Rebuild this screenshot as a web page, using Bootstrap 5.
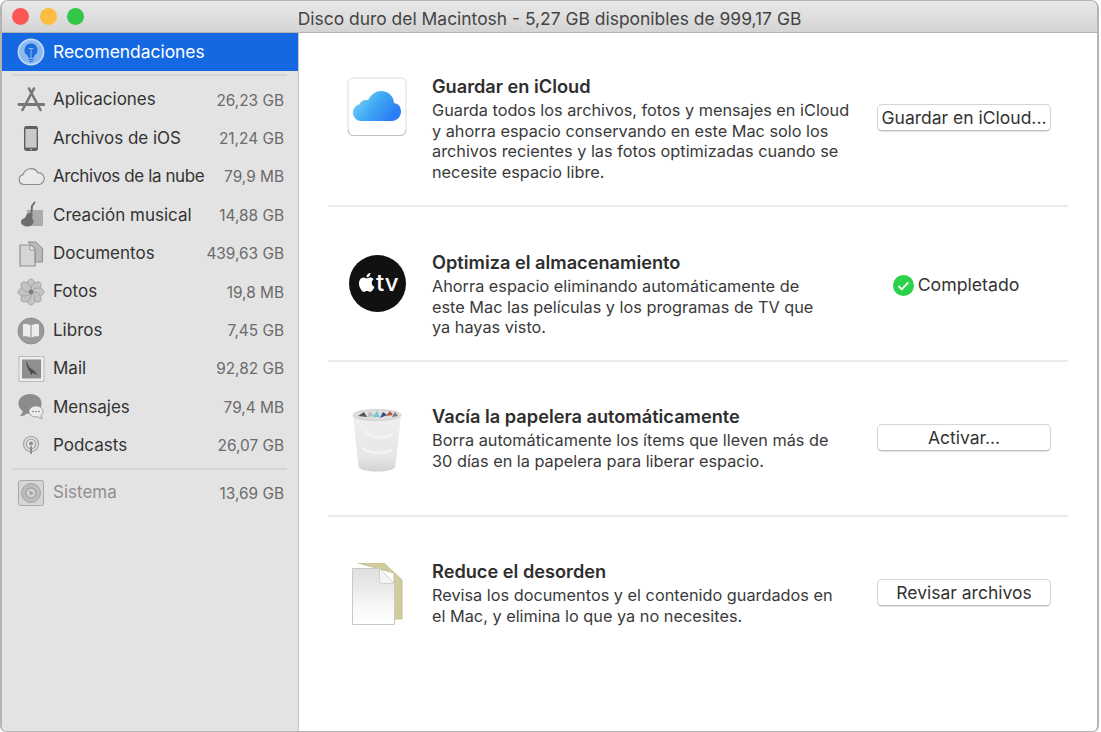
<!DOCTYPE html>
<html lang="es">
<head>
  <meta charset="UTF-8" />
  <title>Disco duro del Macintosh</title>
  <link href="https://cdn.jsdelivr.net/npm/bootstrap@5.3.3/dist/css/bootstrap.min.css" rel="stylesheet" />
  <style>
    html, body { height: 100%; background: #fff; }
    body { font-family: Inter, "Liberation Sans", sans-serif; font-size: 17px; color: #333; overflow: hidden; }
    .mac-window { width: 1099px; height: 732px; border: 1px solid #b4b4b4; border-width: 1px 2px 1px 2px; border-radius: 8px 8px 6px 6px; overflow: hidden; }
    .mac-titlebar { height: 32px; flex: none; background: linear-gradient(#e9e9e9, #d4d4d4); border-bottom: 1px solid #b2b2b2; padding-left: 10px; }
    .light { width: 17px; height: 17px; border-radius: 50%; margin-right: 10.5px; }
    .light-red { background: #fc5753; }
    .light-yellow { background: #fdbc40; }
    .light-green { background: #33c748; }
    .mac-title { font-size: 17.45px; color: #444; left: 0; right: 0; top: 0; line-height: 35px; }
    .mac-side { width: 297px; background: #e3e3e3; border-right: 1px solid #c4c4c4; }
    .side-selected { height: 38px; background: #1469e2; color: #fff; padding-left: 15px; font-size: 17.4px; }
    .side-row { height: 38.4px; padding: 0 14px 0 15px; }
    .side-icon { width: 28px; height: 28px; margin-right: 8px; flex: none; }
    .side-size { color: #6b6b6b; font-size: 15.4px; margin-left: auto; }
    .side-line { height: 2px; background: #d3d3d3; margin: 0 11px 0 10px; }
    .side-line-top { margin-top: 3px; margin-bottom: 5px; }
    .side-line-bottom { margin-top: 3px; margin-bottom: 4px; }
    .side-muted { color: #8f8f8f; }
    .side-tight { letter-spacing: -.4px; }
    .mac-main { padding: 0 29px 0 29px; }
    .rec-row { height: 155px; padding-top: 45px; border-bottom: 2px solid #eaeaea; }
    .rec-first { height: 174px; padding-top: 43px; }
    .rec-last { border-bottom: 0; }
    .rec-icon { width: 104px; padding: 1px 0 0 19px; flex: none; }
    .rec-text { width: 445px; flex: none; }
    .rec-title { font-size: 18.2px; font-weight: 600; line-height: 20px; color: #2e2e2e; margin-bottom: 4px; }
    .rec-desc { font-size: 16.3px; line-height: 20.5px; color: #3a3a3a; margin: 0; }
    .rec-action { width: 174px; flex: none; }
    .mac-btn { width: 174px; height: 27px; padding: 0; font-size: 17.5px; line-height: 25px; color: #333; background: #fff; border: 1px solid #d6d6d6; border-bottom-color: #bdbdbd; border-radius: 5px; box-shadow: 0 1px 1px rgba(0,0,0,.12); }
    .action-first { margin-top: 28px; }
    .action-done { margin-top: 22px; padding-right: 16px; font-size: 17.7px; line-height: 22px; }
    .action-mid { margin-top: 17px; }
    .title-up { margin-top: -1px; }
  </style>
</head>
<body>
  <div class="mac-window d-flex flex-column">
    <div class="mac-titlebar d-flex align-items-center position-relative">
      <span class="light light-red"></span>
      <span class="light light-yellow"></span>
      <span class="light light-green"></span>
      <div class="mac-title position-absolute text-center">Disco duro del Macintosh - 5,27 GB disponibles de 999,17 GB</div>
    </div>
    <div class="d-flex flex-grow-1">
      <div class="mac-side">
        <div class="side-selected d-flex align-items-center">
          <svg class="side-icon" viewBox="0 0 28 28">
            <circle cx="14" cy="14" r="12.6" fill="#8db8f2" stroke="#c3d9f8" stroke-width="1.6"/>
            <path d="M14 5.5a6.5 6.5 0 0 0-4 11.6c.9.8 1.2 1.6 1.3 2.9h5.4c.1-1.3.4-2.1 1.3-2.9A6.5 6.5 0 0 0 14 5.5z" fill="#1e6fdc"/>
            <path d="M11.5 21h5v1.2h-5zM12.4 23h3.2v.9h-3.2z" fill="#1e6fdc"/>
            <path d="M11.5 10.5h5M14 10.5V20" stroke="#8db8f2" stroke-width="1" fill="none"/>
          </svg>
          <span>Recomendaciones</span>
        </div>
        <div class="side-line side-line-top"></div>

        <div class="side-row d-flex align-items-center">
          <svg class="side-icon" viewBox="0 0 28 28">
            <g stroke="#777" stroke-width="2.6" stroke-linecap="round" fill="none">
              <path d="M12 2.500 23.500 24M17 2.500 5.500 24"/>
              <path d="M2 18.500h25" stroke-width="2.8"/>
            </g>
          </svg>
          <span>Aplicaciones</span><span class="side-size">26,23 GB</span>
        </div>
        <div class="side-row d-flex align-items-center">
          <svg class="side-icon" viewBox="0 0 28 28">
            <rect x="7" y="1" width="14" height="25" rx="2.4" fill="#5f5f5f"/>
            <rect x="8.4" y="4" width="11.2" height="18.6" fill="#c9c9c9"/>
            <circle cx="14" cy="24.3" r=".9" fill="#bbb"/>
          </svg>
          <span>Archivos de iOS</span><span class="side-size">21,24 GB</span>
        </div>
        <div class="side-row d-flex align-items-center">
          <svg class="side-icon" viewBox="0 0 28 28">
            <path d="M7 22.5a5 5 0 0 1-.8-9.9 8 8 0 0 1 14.6-2 6 6 0 0 1 1.4 11.9z" fill="#e9e9e9" stroke="#8a8a8a" stroke-width="1.1" transform="translate(0 -1)"/>
          </svg>
          <span class="side-tight">Archivos de la nube</span><span class="side-size">79,9 MB</span>
        </div>
        <div class="side-row d-flex align-items-center">
          <svg class="side-icon" viewBox="0 0 28 28">
            <rect x="10" y="9" width="16" height="16" fill="#ababab"/>
            <path d="M17.5 1.5 15 5l-.8 9.5" stroke="#6e6e6e" stroke-width="2" fill="none" stroke-linecap="round"/>
            <path d="M12.5 12c1.5 0 3 1 3 2.6 0 1.1-.6 1.6-.3 2.7.4 1.1 1.3 1.700 1.300 3.500 0 3-2.800 4.700-6 4.700s-6.500-1.700-6.500-4.500c0-2 1.300-2.800 2.800-3.500 1.300-.6 1.500-1.200 2.300-3 .6-1.500 1.500-2.500 3.400-2.500z" fill="#6d6d6d"/>
          </svg>
          <span>Creación musical</span><span class="side-size">14,88 GB</span>
        </div>
        <div class="side-row d-flex align-items-center">
          <svg class="side-icon" viewBox="0 0 28 28">
            <path d="M11 2h8l6.500 6.500V22H18V8z" fill="#b9b9b9" stroke="#8f8f8f" stroke-width="1"/>
            <path d="M3 5h10l5 5v16H3z" fill="#d5d5d5" stroke="#8f8f8f" stroke-width="1.200"/>
            <path d="M13 5v5h5" fill="#efefef" stroke="#8f8f8f" stroke-width="1"/>
          </svg>
          <span>Documentos</span><span class="side-size">439,63 GB</span>
        </div>
        <div class="side-row d-flex align-items-center">
          <svg class="side-icon" viewBox="0 0 28 28">
            <g fill="#c4c4c4" stroke="#9a9a9a" stroke-width=".8">
              <ellipse cx="14" cy="7" rx="4" ry="6"/>
              <ellipse cx="14" cy="7" rx="4" ry="6" transform="rotate(45 14 14)"/>
              <ellipse cx="14" cy="7" rx="4" ry="6" transform="rotate(90 14 14)"/>
              <ellipse cx="14" cy="7" rx="4" ry="6" transform="rotate(135 14 14)"/>
              <ellipse cx="14" cy="7" rx="4" ry="6" transform="rotate(180 14 14)"/>
              <ellipse cx="14" cy="7" rx="4" ry="6" transform="rotate(225 14 14)"/>
              <ellipse cx="14" cy="7" rx="4" ry="6" transform="rotate(270 14 14)"/>
              <ellipse cx="14" cy="7" rx="4" ry="6" transform="rotate(315 14 14)"/>
            </g>
            <circle cx="14" cy="14" r="2.400" fill="#7d7d7d"/>
          </svg>
          <span>Fotos</span><span class="side-size">19,8 MB</span>
        </div>
        <div class="side-row d-flex align-items-center">
          <svg class="side-icon" viewBox="0 0 28 28">
            <circle cx="14" cy="14" r="13" fill="#9a9a9a" stroke="#888" stroke-width=".8"/>
            <path d="M14 9c-2-1.800-5-2.200-8-1.800v12.300c3-.4 6 0 8 1.500 2-1.500 5-1.900 8-1.500V7.200c-3-.4-6 0-8 1.800z" fill="#ececec"/>
            <path d="M14 9v12" stroke="#8a8a8a" stroke-width="1"/>
          </svg>
          <span>Libros</span><span class="side-size">7,45 GB</span>
        </div>
        <div class="side-row d-flex align-items-center">
          <svg class="side-icon" viewBox="0 0 28 28">
            <rect x="2" y="1.500" width="25" height="25" fill="#ededed" stroke="#a6a6a6" stroke-width="1" stroke-dasharray="1.500 .7"/>
            <rect x="5" y="4.500" width="19" height="19" fill="#8f8f8f"/>
            <path d="M9 6.500c1.500 1.500 2 4 3.500 6 2 1.500 5.500 3.500 8 7.500-2.500-1.500-4-1.500-5-2l-1.500 2.500-1-3.500c-2-2-3.500-6-4-10.500z" fill="#4d4d4d"/>
          </svg>
          <span>Mail</span><span class="side-size">92,82 GB</span>
        </div>
        <div class="side-row d-flex align-items-center">
          <svg class="side-icon" viewBox="0 0 28 28">
            <path d="M13 1C6.500 1 1.500 5 1.500 10.500c0 3.200 1.700 6 4.300 7.700-.3 1.800-1.500 3.500-3 4.800 3 .1 5.500-1 7.300-2.600 1 .2 1.900.3 2.900.3 6.500 0 11.500-4.200 11.500-10.200S19.500 1 13 1z" fill="#8c8c8c"/>
            <path d="M19 13c-3.900 0-7 2.400-7 5.500s3.100 5.500 7 5.500c.6 0 1.200-.1 1.800-.2 1.200 1 2.800 1.700 4.700 1.700-.9-.8-1.600-1.900-1.800-3 1.400-1 2.300-2.400 2.300-4 0-3.100-3.100-5.500-7-5.500z" fill="#ededed" stroke="#8c8c8c" stroke-width=".8"/>
            <g fill="#777"><circle cx="16" cy="18.500" r=".8"/><circle cx="19" cy="18.500" r=".8"/><circle cx="22" cy="18.500" r=".8"/></g>
          </svg>
          <span>Mensajes</span><span class="side-size">79,4 MB</span>
        </div>
        <div class="side-row d-flex align-items-center">
          <svg class="side-icon" viewBox="0 0 28 28">
            <circle cx="14" cy="12" r="7.500" fill="none" stroke="#a3a3a3" stroke-width="1.200"/>
            <circle cx="14" cy="12" r="4.800" fill="none" stroke="#a3a3a3" stroke-width="1.200"/>
            <circle cx="14" cy="11.500" r="2" fill="#8f8f8f"/>
            <rect x="13" y="14" width="2" height="8" rx="1" fill="#8f8f8f"/>
          </svg>
          <span>Podcasts</span><span class="side-size">26,07 GB</span>
        </div>
        <div class="side-line side-line-bottom"></div>
        <div class="side-row d-flex align-items-center side-muted">
          <svg class="side-icon" viewBox="0 0 28 28">
            <rect x="1.500" y="1.500" width="25" height="25" rx="2" fill="#d6d6d6" stroke="#a8a8a8" stroke-width="1"/>
            <circle cx="14" cy="14" r="9.500" fill="#bcbcbc" stroke="#a6a6a6" stroke-width="1"/>
            <circle cx="14" cy="14" r="5" fill="#d4d4d4" stroke="#a6a6a6" stroke-width="1.500"/>
            <path d="M12.500 11.500 17 14l-4.500 2.500z" fill="#a0a0a0"/>
          </svg>
          <span>Sistema</span><span class="side-size">13,69 GB</span>
        </div>
      </div>

      <div class="mac-main flex-grow-1">
        <div class="rec-row rec-first d-flex">
          <div class="rec-icon">
            <svg width="60" height="60" viewBox="0 0 60 60">
              <defs>
                <linearGradient id="cloudFill" x1="0" y1="0" x2="1" y2=".5">
                  <stop offset="0" stop-color="#8bdcf8"/><stop offset=".55" stop-color="#3fa9f5"/><stop offset="1" stop-color="#2a7df2"/>
                </linearGradient>
              </defs>
              <rect x="1" y="1" width="58" height="57.500" rx="5" fill="#fff" stroke="#dcdcdc"/>
              <path d="M1.500 53v1a4.500 4.500 0 0 0 4.500 4.500h48a4.500 4.500 0 0 0 4.500-4.500v-1" fill="none" stroke="#c0c0c0" stroke-width="1"/>
              <path d="M14 44a8.500 8.500 0 0 1-1.500-16.800c1.500-3.500 5-5 8.500-4C23.500 18.500 28 14 34 14c7.500 0 12.500 5 13 12 4.500.8 7 4 7 8.500 0 5-4 9.500-9 9.500z" fill="url(#cloudFill)"/>
            </svg>
          </div>
          <div class="rec-text">
            <h5 class="rec-title">Guardar en iCloud</h5>
            <p class="rec-desc">Guarda todos los archivos, fotos y mensajes en iCloud<br>y ahorra espacio conservando en este Mac solo los<br>archivos recientes y las fotos optimizadas cuando se<br>necesite espacio libre.</p>
          </div>
          <div class="rec-action action-first">
            <button class="btn mac-btn" type="button">Guardar en iCloud...</button>
          </div>
        </div>

        <div class="rec-row d-flex">
          <div class="rec-icon">
            <svg width="60" height="60" viewBox="0 0 60 60">
              <circle cx="30.500" cy="30.500" r="28.500" fill="#111"/>
              <g transform="translate(3.500 0)">
                <path d="M21.200 29.800c0-2.300 1.900-3.400 2-3.500-1.100-1.600-2.800-1.800-3.400-1.800-1.400-.1-2.800.9-3.500.9-.8 0-1.900-.9-3.100-.8-1.600 0-3.100.9-3.900 2.300-1.700 2.900-.4 7.200 1.200 9.500.8 1.200 1.800 2.400 3 2.400 1.200-.1 1.700-.8 3.100-.8s1.900.8 3.100.8c1.300 0 2.100-1.200 2.900-2.300.9-1.300 1.300-2.600 1.300-2.700-.1 0-2.700-1-2.700-4zM18.900 22.900c.6-.8 1.100-1.900 1-3-.9 0-2.100.6-2.800 1.400-.6.700-1.100 1.800-1 2.900 1.100.1 2.100-.5 2.800-1.300z" fill="#fff"/>
              </g>
              <text x="29" y="38" fill="#fff" font-family="Inter, sans-serif" font-size="24" font-weight="500">tv</text>
            </svg>
          </div>
          <div class="rec-text">
            <h5 class="rec-title">Optimiza el almacenamiento</h5>
            <p class="rec-desc">Ahorra espacio eliminando automáticamente de<br>este Mac las películas y los programas de TV que<br>ya hayas visto.</p>
          </div>
          <div class="rec-action action-done d-flex justify-content-center align-items-center align-self-start">
            <svg class="me-1 flex-shrink-0" width="21" height="21" viewBox="0 0 21 21">
              <circle cx="10.500" cy="10.500" r="10.500" fill="#2ad14b"/>
              <path d="M5.500 11l3.300 3.300 6.500-7" fill="none" stroke="#fff" stroke-width="1.800"/>
            </svg>
            <span>Completado</span>
          </div>
        </div>

        <div class="rec-row d-flex">
          <div class="rec-icon">
            <svg width="60" height="66" viewBox="0 0 60 66">
              <defs>
                <linearGradient id="trashFill" x1="0" y1="0" x2="0" y2="1">
                  <stop offset="0" stop-color="#efefef"/><stop offset=".75" stop-color="#e6e6e6"/><stop offset="1" stop-color="#d2d2d2"/>
                </linearGradient>
              </defs>
              <path d="M6 7.500 11.500 58c.3 3 5 5.500 18.500 5.500S48 61 48.500 58L54 7.500z" fill="url(#trashFill)"/>
              <ellipse cx="30" cy="7" rx="24" ry="5.500" fill="#dedede" stroke="#c9c9c9" stroke-width=".8"/>
              <g>
                <path d="M11 8l6-4 3 5z" fill="#555"/>
                <path d="M20 9l3-6 4 5z" fill="#bbb"/>
                <path d="M26 9l4-6 3 6z" fill="#6fc7d8"/>
                <path d="M33 10l3-6 4 3z" fill="#2f4a86"/>
                <path d="M39 8l4-5 3 4z" fill="#b5533c"/>
                <path d="M45 9l3-5 3 4z" fill="#777"/>
              </g>
              <path d="M17 22c6 8 20 10 28 4M15 40c8 6 22 6 30 2" stroke="#f6f6f6" stroke-width="3" opacity=".7" fill="none"/>
            </svg>
          </div>
          <div class="rec-text">
            <h5 class="rec-title title-up">Vacía la papelera automáticamente</h5>
            <p class="rec-desc">Borra automáticamente los ítems que lleven más de<br>30 días en la papelera para liberar espacio.</p>
          </div>
          <div class="rec-action action-mid">
            <button class="btn mac-btn" type="button">Activar...</button>
          </div>
        </div>

        <div class="rec-row rec-last d-flex">
          <div class="rec-icon">
            <svg width="60" height="68" viewBox="0 0 60 68">
              <defs>
                <linearGradient id="pageFill" x1="0" y1="0" x2="0" y2="1">
                  <stop offset="0" stop-color="#dedede"/><stop offset=".7" stop-color="#f8f8f8"/><stop offset="1" stop-color="#fff"/>
                </linearGradient>
              </defs>
              <path d="M11 0h26l18 17v39h-8V10z" fill="#d1cb9e" stroke="#c7c194"/>
              <path d="M5.500 5.500h27l15 15v41h-42z" fill="url(#pageFill)" stroke="#c9c9c9"/>
              <path d="M32.500 5.500v12a3 3 0 0 0 3 3h12z" fill="#f4f4f4" stroke="#d0d0d0"/>
            </svg>
          </div>
          <div class="rec-text">
            <h5 class="rec-title title-up">Reduce el desorden</h5>
            <p class="rec-desc">Revisa los documentos y el contenido guardados en<br>el Mac, y elimina lo que ya no necesites.</p>
          </div>
          <div class="rec-action action-mid">
            <button class="btn mac-btn" type="button">Revisar archivos</button>
          </div>
        </div>
      </div>
    </div>
  </div>

  <script src="https://cdn.jsdelivr.net/npm/bootstrap@5.3.3/dist/js/bootstrap.bundle.min.js"></script>
</body>
</html>
